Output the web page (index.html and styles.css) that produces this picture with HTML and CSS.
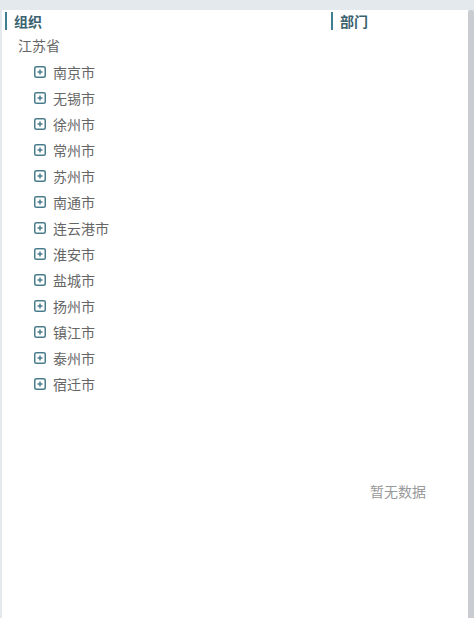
FILE: index.html
```html
<!DOCTYPE html>
<html lang="zh">
<head>
<meta charset="utf-8">
<link rel="stylesheet" href="styles.css">
</head>
<body>
<div class="app">
  <div class="topbar"></div>
  <div class="main">
    <div class="panel">
      <div class="col col-org">
        <div class="title"><span class="bar"></span>组织</div>
        <div class="root">江苏省</div>
        <ul class="tree">
          <li><svg class="ico" viewBox="0 0 12 12"><rect x="0.75" y="0.75" width="10.5" height="10.5" rx="1.5"/><path d="M3.5 6h5M6 3.5v5"/></svg>南京市</li>
          <li><svg class="ico" viewBox="0 0 12 12"><rect x="0.75" y="0.75" width="10.5" height="10.5" rx="1.5"/><path d="M3.5 6h5M6 3.5v5"/></svg>无锡市</li>
          <li><svg class="ico" viewBox="0 0 12 12"><rect x="0.75" y="0.75" width="10.5" height="10.5" rx="1.5"/><path d="M3.5 6h5M6 3.5v5"/></svg>徐州市</li>
          <li><svg class="ico" viewBox="0 0 12 12"><rect x="0.75" y="0.75" width="10.5" height="10.5" rx="1.5"/><path d="M3.5 6h5M6 3.5v5"/></svg>常州市</li>
          <li><svg class="ico" viewBox="0 0 12 12"><rect x="0.75" y="0.75" width="10.5" height="10.5" rx="1.5"/><path d="M3.5 6h5M6 3.5v5"/></svg>苏州市</li>
          <li><svg class="ico" viewBox="0 0 12 12"><rect x="0.75" y="0.75" width="10.5" height="10.5" rx="1.5"/><path d="M3.5 6h5M6 3.5v5"/></svg>南通市</li>
          <li><svg class="ico" viewBox="0 0 12 12"><rect x="0.75" y="0.75" width="10.5" height="10.5" rx="1.5"/><path d="M3.5 6h5M6 3.5v5"/></svg>连云港市</li>
          <li><svg class="ico" viewBox="0 0 12 12"><rect x="0.75" y="0.75" width="10.5" height="10.5" rx="1.5"/><path d="M3.5 6h5M6 3.5v5"/></svg>淮安市</li>
          <li><svg class="ico" viewBox="0 0 12 12"><rect x="0.75" y="0.75" width="10.5" height="10.5" rx="1.5"/><path d="M3.5 6h5M6 3.5v5"/></svg>盐城市</li>
          <li><svg class="ico" viewBox="0 0 12 12"><rect x="0.75" y="0.75" width="10.5" height="10.5" rx="1.5"/><path d="M3.5 6h5M6 3.5v5"/></svg>扬州市</li>
          <li><svg class="ico" viewBox="0 0 12 12"><rect x="0.75" y="0.75" width="10.5" height="10.5" rx="1.5"/><path d="M3.5 6h5M6 3.5v5"/></svg>镇江市</li>
          <li><svg class="ico" viewBox="0 0 12 12"><rect x="0.75" y="0.75" width="10.5" height="10.5" rx="1.5"/><path d="M3.5 6h5M6 3.5v5"/></svg>泰州市</li>
          <li><svg class="ico" viewBox="0 0 12 12"><rect x="0.75" y="0.75" width="10.5" height="10.5" rx="1.5"/><path d="M3.5 6h5M6 3.5v5"/></svg>宿迁市</li>
        </ul>
      </div>
      <div class="col col-dept">
        <div class="title"><span class="bar"></span>部门</div>
        <div class="empty">暂无数据</div>
      </div>
    </div>
    <div class="scrollbar"></div>
  </div>
</div>
</body>
</html>
```

FILE: styles.css
```css
html, body {
  margin: 0;
  padding: 0;
}
body {
  font-family: "Noto Sans CJK SC", "Noto Sans", sans-serif;
  font-size: 14px;
  color: #666;
  background: #e4e9ed;
}
.app {
  display: flex;
  flex-direction: column;
  width: 474px;
  height: 618px;
  overflow: hidden;
}
.topbar {
  height: 10px;
  background: #e4e9ed;
  flex: none;
}
.main {
  flex: 1;
  display: flex;
  padding-left: 2px;
  background: #e4e9ed;
}
.panel {
  flex: 1;
  display: flex;
  background: #fff;
}
.scrollbar {
  width: 6px;
  background: #c9ccd0;
  border-radius: 3px 3px 0 0;
}
.col-org {
  width: 326px;
  padding-left: 3px;
  box-sizing: border-box;
}
.col-dept {
  flex: 1;
  display: flex;
  flex-direction: column;
}
.title {
  display: flex;
  align-items: center;
  height: 23px;
  padding-bottom: 1px;
  box-sizing: border-box;
  font-weight: bold;
  font-size: 14px;
  color: #3b6270;
}
.col-dept .title {
  padding-left: 3px;
}
.bar {
  width: 2px;
  height: 18px;
  background: #3f7f90;
  margin-right: 7px;
}
.root {
  height: 26px;
  line-height: 25px;
  padding-left: 13px;
}
.tree {
  list-style: none;
  margin: 0;
  padding: 0 0 0 29px;
}
.tree li {
  display: flex;
  align-items: center;
  height: 26px;
  line-height: 20px;
}
.tree li .ico {
  margin-top: 1px;
}
.tree li {
  padding-bottom: 1px;
  box-sizing: border-box;
}
.ico {
  width: 12px;
  height: 12px;
  margin-right: 7px;
  fill: none;
  stroke: #4a7d8a;
  stroke-width: 1.5;
}
.empty {
  margin-top: 447px;
  text-align: center;
  line-height: 22px;
  color: #999;
}
```
